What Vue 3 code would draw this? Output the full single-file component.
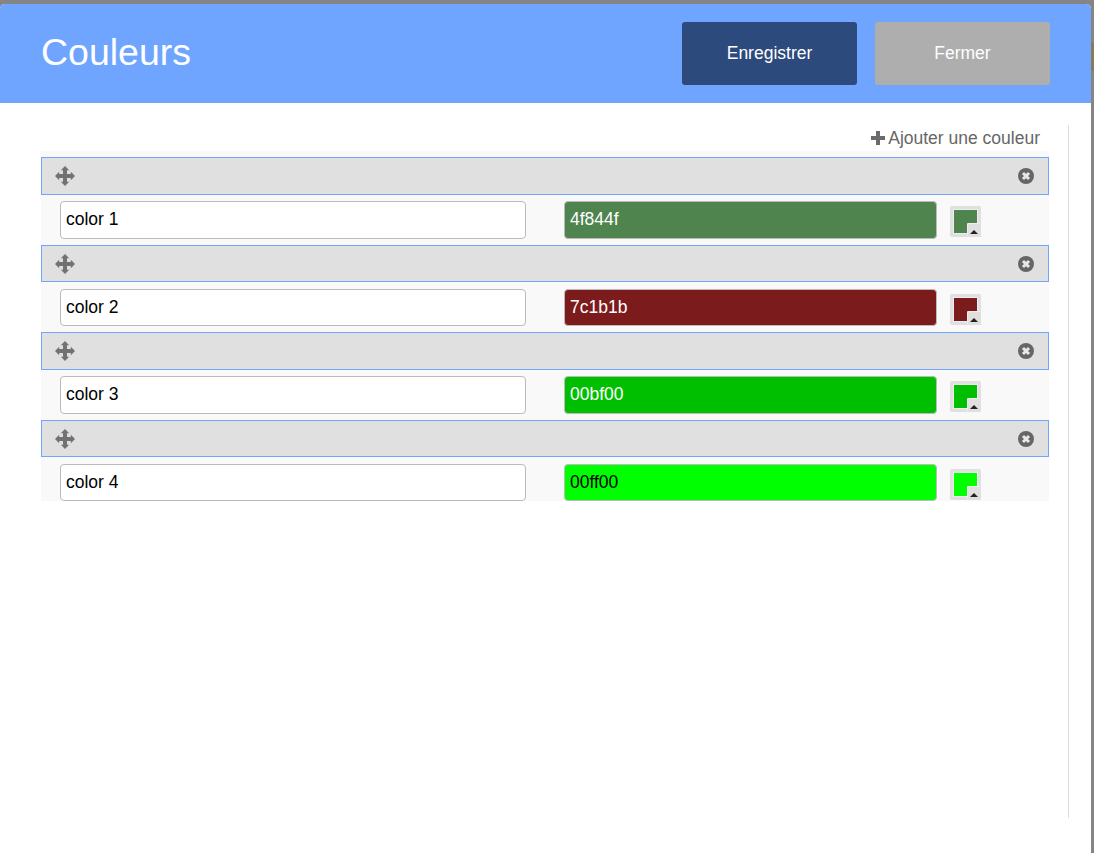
<script setup>
const colors = [
  { name: 'color 1', hex: '4f844f', text: '#fff' },
  { name: 'color 2', hex: '7c1b1b', text: '#fff' },
  { name: 'color 3', hex: '00bf00', text: '#fff' },
  { name: 'color 4', hex: '00ff00', text: '#000' },
]
</script>

<template>
  <div class="modal">
    <header class="head">
      <h1 class="title">Couleurs</h1>
      <div class="actions">
        <button class="btn save">Enregistrer</button>
        <button class="btn close">Fermer</button>
      </div>
    </header>
    <main class="content">
      <div class="pane">
        <div class="add">
          <svg class="plus" width="14" height="14" viewBox="0 0 14 14"><path d="M5 0h4v5h5v4H9v5H5V9H0V5h5z" fill="#6b6b6b"/></svg>
          <span>Ajouter une couleur</span>
        </div>
        <div class="list">
          <div v-for="c in colors" :key="c.hex" class="item">
            <div class="bar">
              <svg class="move" width="20" height="20" viewBox="0 0 20 20">
                <path d="M10 0l4.200 4.200H12v3.800h3.800V5.800L20 10l-4.200 4.200V12H12v3.800h2.200L10 20l-4.200-4.200H8V12H4.200v2.200L0 10l4.200-4.200V8H8V4.200H5.800z" fill="#707273"/>
              </svg>
              <svg class="remove" width="16" height="16" viewBox="0 0 16 16">
                <circle cx="8" cy="8" r="8" fill="#666"/>
                <path d="M5 5l6 6M11 5l-6 6" stroke="#e8e8e8" stroke-width="3"/>
              </svg>
            </div>
            <div class="row">
              <input class="field name" :value="c.name" />
              <input class="field hex" :value="c.hex" :style="{ background: '#' + c.hex, color: c.text }" />
              <div class="swatch">
                <div class="fill" :style="{ background: '#' + c.hex }"></div>
                <div class="corner"><i class="tri"></i></div>
              </div>
            </div>
          </div>
        </div>
      </div>
    </main>
    <div class="peek"></div>
  </div>
</template>

<style>
html, body { margin: 0; background: #858585; }
</style>

<style scoped>
.modal {
  position: relative;
  width: 1091px;
  height: 849px;
  margin-top: 4px;
  background: #fff;
  border-radius: 5px 5px 0 0;
  font-family: "Liberation Sans", Arial, sans-serif;
}
.peek {
  position: absolute;
  left: 100%;
  top: 39px;
  width: 3px;
  height: 28px;
  background: #8a7b58;
}
.head {
  height: 99px;
  background: #6fa5ff;
  border-radius: 5px 5px 0 0;
  display: flex;
  align-items: center;
  justify-content: space-between;
  padding: 0 41px;
  box-sizing: border-box;
}
.title {
  margin: 0 0 3px;
  font-size: 37.500px;
  font-weight: 400;
  color: #fff;
}
.actions { display: flex; gap: 18px; margin-bottom: 1px; }
.btn {
  width: 175px;
  height: 63px;
  border: 0;
  border-radius: 3px;
  color: #fff;
  font: 17.500px "Liberation Sans", Arial, sans-serif;
}
.save { background: #2c4a7c; }
.close { background: #aeaeae; }
.content { padding: 22px 22px 0 41px; }
.pane {
  height: 693px;
  border-right: 1px solid #ddd;
  width: 1027px;
  box-sizing: content-box;
}
.add {
  width: 999px;
  height: 26px;
  display: flex;
  justify-content: flex-end;
  align-items: center;
  gap: 3px;
  color: #666;
  font-size: 17.500px;
}
.list {
  width: 1008px;
  height: 350px;
  padding-top: 6px;
  box-sizing: border-box;
  background: #f9f9f9;
}
.item { height: 87.500px; }
.item:last-child { height: 81.500px; overflow: hidden; }
.bar {
  height: 37.500px;
  box-sizing: border-box;
  background: #e0e0e0;
  border: 1px solid #6fa5ff;
  display: flex;
  align-items: center;
  justify-content: space-between;
  padding: 0 14px 0 13px;
}
.move, .remove { margin-top: 1px; }
.row {
  height: 50px;
  padding: 6.500px 0 0 19px;
  box-sizing: border-box;
  display: flex;
  align-items: flex-start;
}
.field {
  height: 37.500px;
  box-sizing: border-box;
  border: 1px solid #bbb;
  border-radius: 4px;
  padding: 0 5px;
  font: 17.500px "Liberation Sans", Arial, sans-serif;
  color: #000;
  background: #fff;
  outline: none;
}
.name { width: 466px; margin-right: 38px; }
.hex { width: 373px; margin-right: 13px; }
.swatch {
  position: relative;
  width: 31px;
  height: 31px;
  margin-top: 5px;
  box-sizing: border-box;
  background: #e0e0e0;
  border-radius: 2px;
  padding: 4px;
}
.fill {
  width: 23px;
  height: 23px;
  box-sizing: border-box;
  outline: 1px solid #eee;
}
.corner {
  position: absolute;
  right: 0;
  bottom: 0;
  width: 13px;
  height: 13px;
  background: #e0e0e0;
  border-top-left-radius: 1px;
  box-shadow: -1px -1px 0 #eee;
}
.tri {
  position: absolute;
  right: 3px;
  bottom: 3px;
  border: 4px solid transparent;
  border-top: 0;
  border-bottom: 4px solid #222;
}
</style>
